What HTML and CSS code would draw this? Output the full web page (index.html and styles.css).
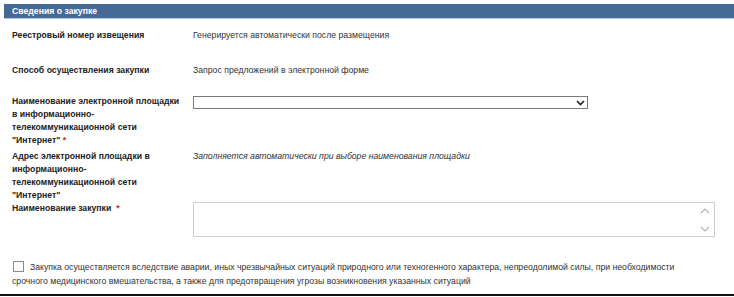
FILE: index.html
```html
<!DOCTYPE html>
<html lang="ru">
<head>
  <meta charset="UTF-8" />
  <title>Сведения о закупке</title>
  <link rel="stylesheet" href="styles.css">
</head>
<body>
  <div class="section">
    <div class="section-title">Сведения о закупке</div>

    <div class="row row-first">
      <div class="label">Реестровый номер извещения</div>
      <div class="value">Генерируется автоматически после размещения</div>
    </div>

    <div class="row row-second">
      <div class="label">Способ осуществления закупки</div>
      <div class="value">Запрос предложений в электронной форме</div>
    </div>

    <div class="row row-third">
      <div class="label">Наименование электронной площадки в информационно-телекоммуникационной сети "Интернет" <span class="req">*</span></div>
      <div class="value">
        <div class="select-wrap">
          <select class="select"></select>
          <svg class="select-arrow" width="9" height="6" viewBox="0 0 9 6">
            <path d="M1 1 L4.5 4.5 L8 1" fill="none" stroke="#222" stroke-width="1.6"/>
          </svg>
        </div>
      </div>
    </div>

    <div class="row row-address">
      <div class="label">Адрес электронной площадки в информационно-телекоммуникационной сети "Интернет"</div>
      <div class="value hint">Заполняется автоматически при выборе наименования площадки</div>
    </div>

    <div class="row">
      <div class="label">Наименование закупки &nbsp;<span class="req">*</span></div>
      <div class="value">
        <div class="area-wrap">
          <textarea class="area"></textarea>
          <svg class="area-scroll" width="10" height="26" viewBox="0 0 10 26">
            <path d="M1 6 L5 2 L9 6" fill="none" stroke="#b5b5b5" stroke-width="1.2"/>
            <path d="M1 20 L5 24 L9 20" fill="none" stroke="#b5b5b5" stroke-width="1.2"/>
          </svg>
        </div>
      </div>
    </div>

    <p class="emergency">
      <span class="checkbox"></span>Закупка осуществляется вследствие аварии, иных чрезвычайных ситуаций природного или техногенного характера, непреодолимой силы, при необходимости срочного медицинского вмешательства, а также для предотвращения угрозы возникновения указанных ситуаций
    </p>
  </div>
</body>
</html>
```

FILE: styles.css
```css
body {
  margin: 0;
  background: #fff;
  font-family: "Liberation Sans", Arial, sans-serif;
  font-size: 8.7px;
  color: #333;
}

.section {
  padding-top: 4px;
  border-bottom: 2px solid #111;
}

.section-title {
  margin-left: 4px;
  height: 14px;
  line-height: 14px;
  padding-left: 8px;
  background: #466a96;
  border-bottom: 1px solid #b4c6dc;
  color: #fff;
  font-weight: bold;
}

.row {
  display: grid;
  grid-template-columns: 181px 1fr;
  padding-left: 12px;
  line-height: 13px;
}

.row-first {
  margin-top: 10px;
}

.row-second {
  margin-top: 22px;
}

.row-third {
  margin-top: 18px;
}

.row-address {
  margin-top: 3px;
}

.label {
  font-weight: bold;
  color: #222;
  padding-right: 8px;
}

.req {
  color: #d02020;
}

.hint {
  font-style: italic;
  color: #333;
}

.select-wrap {
  position: relative;
  width: 395px;
  margin-top: 1px;
}

.select {
  display: block;
  width: 100%;
  height: 13px;
  margin: 0;
  padding: 0;
  border: 1px solid #7a7a7a;
  border-radius: 0;
  background: #fff;
  appearance: none;
  -webkit-appearance: none;
}

.select-arrow {
  position: absolute;
  right: 3px;
  top: 4px;
}

.area-wrap {
  position: relative;
  width: 522px;
  height: 35px;
}

.area {
  display: block;
  box-sizing: border-box;
  width: 100%;
  height: 35px;
  margin: 0;
  border: 1px solid #cfcfcf;
  resize: none;
  overflow: hidden;
}

.area-scroll {
  position: absolute;
  right: 5px;
  top: 5px;
}

.emergency {
  margin: 23px 0 6px;
  padding-left: 12px;
  padding-right: 50px;
  line-height: 14px;
  color: #333;
}

.checkbox {
  display: inline-block;
  box-sizing: border-box;
  width: 11px;
  height: 11px;
  margin: 0 6px 0 1px;
  border: 1px solid #8a8a8a;
  vertical-align: -2px;
}
```
